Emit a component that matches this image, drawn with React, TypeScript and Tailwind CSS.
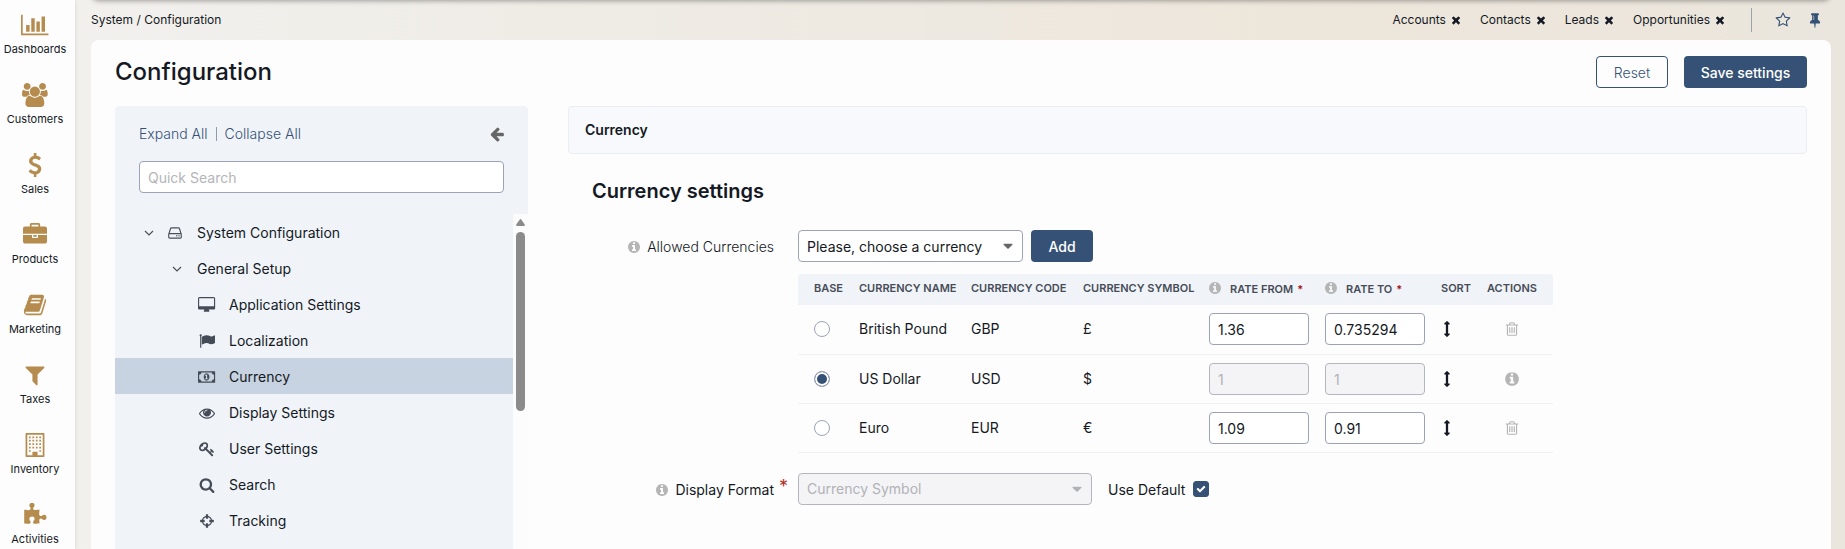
import React, { useState } from "react";

type Glyph = { w?: number; d: string };

const glyphs: Record<string, Glyph> = {
  chart: {
    w: 2048,
    d: "M640 896v512h-256v-512h256zm384-512v1024h-256v-1024h256zm1024 1152v128h-2048v-1536h128v1408h1920zm-640-896v768h-256v-768h256zm384-384v1152h-256v-1152h256z",
  },
  users: {
    w: 1920,
    d: "M593 896q-162 5-265 128h-134q-82 0-138-40.5t-56-118.5q0-353 124-353 6 0 43.5 21t97.5 42.5 119 21.5q67 0 133-23-5 37-5 66 0 139 81 256zm1071 637q0 120-73 189.5t-194 69.5h-874q-121 0-194-69.5t-73-189.5q0-53 3.5-103.5t14-109 26.5-108.5 43-97.5 62-81 85.5-53.5 111.5-20q10 0 43 21.5t73 48 107 48 135 21.5 135-21.5 107-48 73-48 43-21.5q61 0 111.5 20t85.5 53.5 62 81 43 97.5 26.5 108.5 14 109 3.5 103.5zm-1024-1277q0 106-75 181t-181 75-181-75-75-181 75-181 181-75 181 75 75 181zm704 384q0 159-112.5 271.5t-271.5 112.5-271.5-112.5-112.5-271.5 112.5-271.5 271.5-112.5 271.5 112.5 112.5 271.5zm576 225q0 78-56 118.5t-138 40.5h-134q-103-123-265-128 81-117 81-256 0-29-5-66 66 23 133 23 59 0 119-21.5t97.5-42.5 43.5-21q124 0 124 353zm-128-609q0 106-75 181t-181 75-181-75-75-181 75-181 181-75 181 75 75 181z",
  },
  dollar: {
    d: "M1362 1185q0 153-99.5 263.5t-258.5 136.5v175q0 14-9 23t-23 9h-135q-13 0-22.5-9.5t-9.5-22.5v-175q-66-9-127.5-31t-101.5-44.5-74-48-46.5-37.5-17.5-18q-17-21-2-41l103-135q7-10 23-12 15-2 24 9l2 2q113 99 243 125 37 8 74 8 81 0 142.5-43t61.5-122q0-28-15-53t-33.5-42-58.5-37.5-66-32-80-32.5q-39-16-61.5-25t-61.5-26.5-62.5-31-56.5-35.5-53.5-42.5-43.5-49-35.5-58-21-66.5-8.5-78q0-138 98-242t255-134v-180q0-13 9.5-22.5t22.5-9.5h135q14 0 23 9t9 23v176q57 6 110.5 23t87 33.5 63.5 37.5 39 29 15 14q17 18 5 38l-81 146q-8 15-23 16-14 3-27-7-3-3-14.5-12t-39-26.5-58.5-32-74.5-26-85.5-11.5q-95 0-155 43t-60 111q0 26 8.5 48t29.5 41.5 39.5 33 56 31 60.5 27 70 27.5q53 20 81 31.5t76 35 75.5 42.5 62 50 53 63.5 31.5 76.5 13 94z",
  },
  briefcase: {
    d: "M640 256h512v-128h-512v128zm1152 640v480q0 66-47 113t-113 47h-1472q-66 0-113-47t-47-113v-480h672v160q0 26 19 45t45 19h320q26 0 45-19t19-45v-160h672zm-768 0v128h-256v-128h256zm768-480v384h-1792v-384q0-66 47-113t113-47h352v-160q0-40 28-68t68-28h576q40 0 68 28t28 68v160h352q66 0 113 47t47 113z",
  },
  book: {
    d: "M1703 478q40 57 18 129l-275 906q-19 64-76.5 107.5t-122.5 43.5h-923q-77 0-148.5-53.5t-99.5-131.5q-24-67-2-127 0-4 3-27t4-37q1-8-3-21.5t-3-19.5q2-11 8-21t16.5-23.5 16.5-23.5q23-38 45-91.5t30-91.5q3-10 .5-30t-.5-28q3-11 17-28t17-23q21-36 42-92t25-90q1-9-2.5-32t.5-28q4-13 22-30.5t22-22.5q19-26 42.5-84.5t27.5-96.5q1-8-3-25.5t-2-26.5q2-8 9-18t18-23 17-21q8-12 16.5-30.5t15-35 16-36 19.5-32 26.5-23.5 36-11.5 47.5 5.5l-1 3q38-9 51-9h761q74 0 114 56t18 130l-274 906q-36 119-71.5 153.5t-128.5 34.5h-869q-27 0-38 15-11 16-1 43 24 70 144 70h923q29 0 56-15.5t35-41.5l300-987q7-22 5-57 38 15 59 43zm-1064 2q-4 13 2 22.5t20 9.5h608q13 0 25.5-9.5t16.5-22.5l21-64q4-13-2-22.5t-20-9.5h-608q-13 0-25.5 9.5t-16.5 22.5zm-83 256q-4 13 2 22.5t20 9.5h608q13 0 25.5-9.5t16.5-22.5l21-64q4-13-2-22.5t-20-9.5h-608q-13 0-25.5 9.5t-16.5 22.5z",
  },
  filter: {
    d: "M1595 295q17 41-14 70l-493 493v742q0 42-39 59-13 5-25 5-27 0-45-19l-256-256q-19-19-19-45v-486l-493-493q-31-29-14-70 17-39 59-39h1280q42 0 59 39z",
  },
  building: {
    d: "M256 0h1280q26 0 45 19t19 45v1664q0 26-19 45t-45 19h-1280q-26 0-45-19t-19-45v-1664q0-26 19-45t45-19zM320 128v1536h384v-224q0-32 32-32h320q32 0 32 32v224h384v-1536zM448 256h128v128h-128zM704 256h128v128h-128zM960 256h128v128h-128zM1216 256h128v128h-128zM448 512h128v128h-128zM704 512h128v128h-128zM960 512h128v128h-128zM1216 512h128v128h-128zM448 768h128v128h-128zM704 768h128v128h-128zM960 768h128v128h-128zM1216 768h128v128h-128zM448 1024h128v128h-128zM704 1024h128v128h-128zM960 1024h128v128h-128zM1216 1024h128v128h-128zM448 1280h128v128h-128zM1216 1280h128v128h-128z",
  },
  puzzle: {
    d: "M1755 1083q0 81-44.5 135t-123.5 54q-41 0-77.5-17.5t-59-38-56.5-38-71-17.5q-110 0-110 124 0 39 16 115t15 115v5q-22 0-33 1-34 3-97.5 11.5t-115.5 13.5-98 5q-61 0-103-26.5t-42-83.5q0-37 17.5-71t38-56.5 38-59 17.5-77.5q0-79-54-123.5t-135-44.5q-84 0-143 45.5t-59 127.5q0 43 15 83t33.5 64.5 33.5 53 15 50.5q0 45-46 89-37 35-117 35-95 0-245-24-9-2-27.5-4t-27.5-4l-13-2q-1 0-3-1-2 0-2-1v-1024q2 1 17.5 3.5t34 5 21.5 3.5q150 24 245 24 80 0 117-35 46-44 46-89 0-22-15-50.5t-33.5-53-33.5-64.5-15-83q0-82 59-127.5t144-45.5q80 0 134 44.5t54 123.5q0 41-17.5 77.5t-38 59-38 56.5-17.5 71q0 57 42 83.5t103 26.5q64 0 180-15t163-17v2q-1 2-3.5 17.5t-5 34-3.5 21.5q-24 150-24 245 0 80 35 117 44 46 89 46 22 0 50.5-15t53-33.5 64.5-33.5 83-15q82 0 127.5 59t45.5 143z",
  },
  desktop: {
    w: 1920,
    d: "M1792 992v-832q0-13-9.5-22.5t-22.5-9.5h-1600q-13 0-22.5 9.5t-9.5 22.5v832q0 13 9.5 22.5t22.5 9.5h1600q13 0 22.5-9.5t9.5-22.5zm128-832v1088q0 66-47 113t-113 47h-544q0 37 16 77.5t32 71 16 43.5q0 26-19 45t-45 19h-512q-26 0-45-19t-19-45q0-14 16-44t32-70 16-78h-544q-66 0-113-47t-47-113v-1088q0-66 47-113t113-47h1600q66 0 113 47t47 113z",
  },
  flag: {
    d: "M320 256q0 72-64 110v1266q0 13-9.5 22.5t-22.5 9.5h-64q-13 0-22.5-9.5t-9.5-22.5v-1266q-64-38-64-110 0-53 37.5-90.5t90.5-37.5 90.5 37.5 37.5 90.5zm1472 64v763q0 25-12.5 38.5t-39.5 27.5q-215 116-369 116-61 0-123.5-22t-108.5-48-115.5-48-142.5-22q-192 0-464 146-17 9-33 9-26 0-45-19t-19-45v-742q0-32 31-55 21-14 79-43 236-120 421-120 107 0 200 29t219 88q38 19 88 19 54 0 117.5-21t110-47 88-47 54.5-21q26 0 45 19t19 45z",
  },
  money: {
    w: 1920,
    d: "M768 1152h384v-96h-128v-448h-114l-148 137 77 80q42-37 55-57h2v288h-128v96zm512-256q0 70-21 142t-59.5 134-101.5 101-138 39-138-39-101.5-101-59.5-134-21-142 21-142 59.5-134 101.5-101 138-39 138 39 101.5 101 59.5 134 21 142zm512 256v-512q-106 0-181-75t-75-181h-1152q0 106-75 181t-181 75v512q106 0 181 75t75 181h1152q0-106 75-181t181-75zm128-832v1152q0 26-19 45t-45 19h-1792q-26 0-45-19t-19-45v-1152q0-26 19-45t45-19h1792q26 0 45 19t19 45z",
  },
  eye: {
    d: "M1664 960q-152-236-381-353 61 104 61 225 0 185-131.5 316.5t-316.5 131.5-316.5-131.5-131.5-316.5q0-121 61-225-229 117-381 353 133 205 333.5 326.5t434.5 121.5 434.5-121.5 333.5-326.5zm-720-384q0-20-14-34t-34-14q-125 0-214.5 89.5t-89.5 214.5q0 20 14 34t34 14 34-14 14-34q0-86 61-147t147-61q20 0 34-14t14-34zm848 384q0 34-20 69-140 230-376.5 368.5t-499.5 138.5-499.5-139-376.5-368q-20-35-20-69t20-69q140-229 376.5-368t499.5-139 499.5 139 376.5 368q20 35 20 69z",
  },
  key: {
    d: "M832 512q0-80-56-136t-136-56-136 56-56 136q0 42 19 83-41-19-83-19-80 0-136 56t-56 136 56 136 136 56 136-56 56-136q0-42-19-83 41 19 83 19 80 0 136-56t56-136zm851 704q0 17-49 66t-66 49q-9 0-28.5-16t-36.5-33-38.5-40-24.5-26l-96 96 220 220q28 28 28 68 0 42-39 81t-81 39q-40 0-68-28l-671-671q-176 131-365 131-163 0-265.5-102.5t-102.5-265.5q0-160 95-313t248-248 313-95q163 0 265.5 102.5t102.5 265.5q0 189-131 365l355 355 96-96q-3-3-26-24.5t-40-38.5-33-36.5-16-28.5q0-17 49-66t66-49q13 0 23 10 6 6 46 44.5t82 79.5 86.5 86 73 78 28.5 41z",
  },
  search: {
    d: "M1216 832q0-185-131.5-316.5t-316.5-131.5-316.5 131.5-131.5 316.5 131.5 316.5 316.5 131.5 316.5-131.5 131.5-316.5zm512 832q0 52-38 90t-90 38q-54 0-90-38l-343-342q-179 124-399 124-143 0-273.5-55.5t-225-150-150-225-55.5-273.5 55.5-273.5 150-225 225-150 273.5-55.5 273.5 55.5 225 150 150 225 55.5 273.5q0 220-124 399l343 343q37 37 37 90z",
  },
  crosshairs: {
    d: "M1325 1024h-109q-26 0-45-19t-19-45v-128q0-26 19-45t45-19h109q-32-108-112.5-188.5t-188.5-112.5v109q0 26-19 45t-45 19h-128q-26 0-45-19t-19-45v-109q-108 32-188.5 112.5t-112.5 188.5h109q26 0 45 19t19 45v128q0 26-19 45t-45 19h-109q32 108 112.5 188.5t188.5 112.5v-109q0-26 19-45t45-19h128q26 0 45 19t19 45v109q108-32 188.5-112.5t112.5-188.5zm339-192v128q0 26-19 45t-45 19h-143q-37 161-154.5 278.5t-278.5 154.5v143q0 26-19 45t-45 19h-128q-26 0-45-19t-19-45v-143q-161-37-278.5-154.5t-154.5-278.5h-143q-26 0-45-19t-19-45v-128q0-26 19-45t45-19h143q37-161 154.5-278.5t278.5-154.5v-143q0-26 19-45t45-19h128q26 0 45 19t19 45v143q161 37 278.5 154.5t154.5 278.5h143q26 0 45 19t19 45z",
  },
  close: {
    d: "M1490 1322q0 40-28 68l-136 136q-28 28-68 28t-68-28l-294-294-294 294q-28 28-68 28t-68-28l-136-136q-28-28-28-68t28-68l294-294-294-294q-28-28-28-68t28-68l136-136q28-28 68-28t68 28l294 294 294-294q28-28 68-28t68 28l136 136q28 28 28 68t-28 68l-294 294 294 294q28 28 28 68z",
  },
  star: {
    d: "M1201 1004l306-297-422-62-189-382-189 382-422 62 306 297-73 421 378-199 377 199zm527-357q0 22-26 48l-363 354 86 500q1 7 1 20 0 50-41 50-19 0-40-12l-449-236-449 236q-22 12-40 12-21 0-31.5-14.5t-10.5-35.5q0-6 2-20l86-500-364-354q-25-27-25-48 0-37 56-46l502-73 225-455q19-41 49-41t49 41l225 455 502 73q56 9 56 46z",
  },
  pin: {
    d: "M800 864v-448q0-14-9-23t-23-9-23 9-9 23v448q0 14 9 23t23 9 23-9 9-23zm672 352q0 26-19 45t-45 19h-429l-51 483q-2 12-10.5 20.5t-20.5 8.5h-1q-27 0-32-27l-76-485h-404q-26 0-45-19t-19-45q0-123 78.5-221.5t177.5-98.5v-512q-52 0-90-38t-38-90 38-90 90-38h640q52 0 90 38t38 90-38 90-90 38v512q99 0 177.5 98.5t78.5 221.5z",
  },
  arrowLeft: {
    d: "M1664 896v128q0 53-32.5 90.5t-84.5 37.5h-704l293 294q38 36 38 90t-38 90l-75 76q-37 37-90 37-52 0-91-37l-651-652q-37-37-37-90 0-52 37-91l651-650q38-38 91-38 52 0 90 38l75 74q38 38 38 91t-38 91l-293 293h704q52 0 84.5 37.5t32.5 90.5z",
  },
  info: {
    d: "M1152 1376v-160q0-14-9-23t-23-9h-96v-512q0-14-9-23t-23-9h-320q-14 0-23 9t-9 23v160q0 14 9 23t23 9h96v320h-96q-14 0-23 9t-9 23v160q0 14 9 23t23 9h448q14 0 23-9t9-23zm-128-896v-160q0-14-9-23t-23-9h-192q-14 0-23 9t-9 23v160q0 14 9 23t23 9h192q14 0 23-9t9-23zm640 416q0 209-103 385.5t-279.5 279.5-385.5 103-385.5-103-279.5-279.5-103-385.5 103-385.5 279.5-279.5 385.5-103 385.5 103 279.5 279.5 103 385.5z",
  },
  trash: {
    d: "M704 736v576q0 14-9 23t-23 9h-64q-14 0-23-9t-9-23v-576q0-14 9-23t23-9h64q14 0 23 9t9 23zm256 0v576q0 14-9 23t-23 9h-64q-14 0-23-9t-9-23v-576q0-14 9-23t23-9h64q14 0 23 9t9 23zm256 0v576q0 14-9 23t-23 9h-64q-14 0-23-9t-9-23v-576q0-14 9-23t23-9h64q14 0 23 9t9 23zm128 724v-948h-896v948q0 22 7 40.5t14.5 27 10.5 8.5h832q3 0 10.5-8.5t14.5-27 7-40.5zm-672-1076h448l-48-117q-7-9-17-11h-317q-10 2-17 11zm928 32v64q0 14-9 23t-23 9h-96v948q0 83-47 143.5t-113 60.5h-832q-66 0-113-58.5t-47-141.5v-952h-96q-14 0-23-9t-9-23v-64q0-14 9-23t23-9h309l70-167q15-37 54-63t79-26h320q40 0 79 26t54 63l70 167h309q14 0 23 9t9 23z",
  },
  arrowsV: {
    d: "M1216 320q0 26-19 45t-45 19h-128v1024h128q26 0 45 19t19 45-19 45l-256 256q-19 19-45 19t-45-19l-256-256q-19-19-19-45t19-45 45-19h128v-1024h-128q-26 0-45-19t-19-45 19-45l256-256q19-19 45-19t45 19l256 256q19 19 19 45z",
  },
  drive: {
    d: "M1168 1216q0 33-23.5 56.5t-56.5 23.5-56.5-23.5-23.5-56.5 23.5-56.5 56.5-23.5 56.5 23.5 23.5 56.5zm256 0q0 33-23.5 56.5t-56.5 23.5-56.5-23.5-23.5-56.5 23.5-56.5 56.5-23.5 56.5 23.5 23.5 56.5zm112 160v-320q0-13-9.5-22.5t-22.5-9.5h-1216q-13 0-22.5 9.5t-9.5 22.5v320q0 13 9.5 22.5t22.5 9.5h1216q13 0 22.5-9.5t9.5-22.5zm-1230-480h1180l-157-482q-4-13-16-21.5t-26-8.5h-782q-14 0-26 8.5t-16 21.5zm1358 160v320q0 66-47 113t-113 47h-1216q-66 0-113-47t-47-113v-320q0-25 16-75l197-606q17-53 63-86t101-33h782q55 0 101 33t63 86l197 606q16 50 16 75z",
  },
  check: {
    d: "M1671 566q0 40-28 68l-724 724-136 136q-28 28-68 28t-68-28l-136-136-362-362q-28-28-28-68t28-68l136-136q28-28 68-28t68 28l294 295 656-657q28-28 68-28t68 28l136 136q28 28 28 68z",
  },
  caret: {
    d: "M1408 704q0 26-19 45l-448 448q-19 19-45 19t-45-19l-448-448q-19-19-19-45t19-45 45-19h896q26 0 45 19t19 45z",
  },
  copy: {
    d: "M1024 1248v224q0 13-9.5 22.5t-22.5 9.5h-832v-1376h640v256h832v1280h-480v-128h352v-1024h-512v736z",
  },
};

function Icon({ name, className }: { name: string; className: string }) {
  const g = glyphs[name];
  return (
    <svg viewBox={`0 0 ${g.w ?? 1792} 1792`} fill="currentColor" fillRule="evenodd" aria-hidden="true" className={`shrink-0 ${className}`}>
      <path d={g.d} />
    </svg>
  );
}

function Chevron() {
  return (
    <svg viewBox="0 0 10 6" aria-hidden="true" className="h-[6px] w-[10px] shrink-0 text-[#4a4f59]">
      <path d="M1 1l4 4 4-4" fill="none" stroke="currentColor" strokeWidth="1.2" />
    </svg>
  );
}

const navItems = [
  ["Dashboards", "chart"],
  ["Customers", "users"],
  ["Sales", "dollar"],
  ["Products", "briefcase"],
  ["Marketing", "book"],
  ["Taxes", "filter"],
  ["Inventory", "building"],
  ["Activities", "puzzle"],
];

const pinnedTabs = ["Accounts", "Contacts", "Leads", "Opportunities"];

const treeLeaves = [
  ["Application Settings", "desktop"],
  ["Localization", "flag"],
  ["Currency", "money"],
  ["Display Settings", "eye"],
  ["User Settings", "key"],
  ["Search", "search"],
  ["Tracking", "crosshairs"],
  ["", "copy"],
];

const currencies = [
  { name: "British Pound", code: "GBP", symbol: "£", from: "1.36", to: "0.735294" },
  { name: "US Dollar", code: "USD", symbol: "$", from: "1", to: "1" },
  { name: "Euro", code: "EUR", symbol: "€", from: "1.09", to: "0.91" },
];

const rateInput =
  "block h-8 w-[100px] rounded border border-[#9ca3b8] bg-white px-2 pt-px text-sm text-[#141924] disabled:border-[#b4b6bd] disabled:bg-[#f4f4f6] disabled:text-[#b0b2b7]";

function Sidebar() {
  return (
    <nav aria-label="Main" className="z-10 flex w-[75px] shrink-0 flex-col bg-[#fdfdfd] pt-px shadow-[0_0_4px_rgba(0,0,0,0.12)]">
      {navItems.map(([label, icon]) => (
        <a key={label} href="#" className="flex h-[70px] shrink-0 flex-col items-center px-px pt-3">
          <span className="flex h-6 w-full justify-center pr-[5px] text-[#b68c4e]">
            <Icon name={icon} className="h-6" />
          </span>
          <span className="mt-1 w-full pr-[5px] text-center text-[11px] leading-4 text-[#141924]">{label}</span>
        </a>
      ))}
    </nav>
  );
}

function TopBar() {
  return (
    <header className="flex h-10 items-center justify-between pr-[8px] text-xs text-[#141924]">
      <div>System / Configuration</div>
      <div className="flex items-center">
        <ul className="flex items-center gap-[18px]">
          {pinnedTabs.map((tab) => (
            <li key={tab} className="flex items-center gap-1">
              <a href="#">{tab}</a>
              <button type="button" aria-label={`Close ${tab}`}>
                <Icon name="close" className="h-3 w-3" />
              </button>
            </li>
          ))}
        </ul>
        <span className="mr-[23px] ml-[25px] h-6 w-px bg-[#9ca3b0]" />
        <button type="button" aria-label="Add to favorites" className="text-[#355276]">
          <Icon name="star" className="h-4 w-4" />
        </button>
        <button type="button" aria-label="Pin page" className="ml-4 text-[#355276]">
          <Icon name="pin" className="h-4 w-4" />
        </button>
      </div>
    </header>
  );
}

function ConfigTree() {
  return (
    <aside className="flex w-[413px] shrink-0 flex-col rounded-t bg-[#f0f4f9]">
      <div className="px-6 pt-[18px] pb-[21px]">
        <div className="flex h-5 items-center justify-between text-sm text-[#355276]">
          <div className="flex items-center gap-2 font-light">
            <button type="button">Expand All</button>
            <span className="h-[14px] w-px bg-[#8f9bab]" />
            <button type="button">Collapse All</button>
          </div>
          <button type="button" aria-label="Hide panel" className="-mr-px text-[#666]">
            <Icon name="arrowLeft" className="h-4 w-4" />
          </button>
        </div>
        <input
          type="text"
          aria-label="Quick Search"
          placeholder="Quick Search"
          className="mt-[17px] block h-8 w-full rounded border border-[#9ca3b8] bg-white px-2 pt-px text-sm text-[#141924] placeholder:text-[#b4b5b8]"
        />
      </div>
      <div className="flex min-h-0 flex-1">
        <ul className="min-w-0 flex-1 overflow-hidden text-sm text-[#141924]">
          <li className="flex h-9 items-center pt-0.5 pl-[29px]">
            <Chevron />
            <Icon name="drive" className="ml-[13px] h-4 w-4 text-[#4a4f59]" />
            <span className="ml-[14px]">System Configuration</span>
          </li>
          <li className="flex h-9 items-center pt-0.5 pl-[57px]">
            <Chevron />
            <span className="ml-[15px]">General Setup</span>
          </li>
          {treeLeaves.map(([label, icon]) => (
            <li key={icon} className={label === "Currency" ? "bg-[#c7d3e1]" : ""}>
              <a href="#" className="flex h-9 items-center pt-0.5 pl-[82px]">
                <span className="flex w-5 justify-center text-[#454b57]">
                  <Icon name={icon} className="h-4" />
                </span>
                <span className="ml-3">{label}</span>
              </a>
            </li>
          ))}
        </ul>
        <div aria-hidden="true" className="flex w-[15px] shrink-0 flex-col items-center bg-[#fcfcfc] pt-[5px]">
          <svg viewBox="0 0 9 7" className="h-[7px] w-[9px] fill-[#8b8b8b]">
            <path d="M3.6.7q.9-1.2 1.8 0L8.800 5.600Q9 7 8 7H1Q0 7 .2 5.600z" />
          </svg>
          <div className="mt-[6px] h-[179px] w-[9px] rounded-full bg-[#8b8b8b]" />
        </div>
      </div>
    </aside>
  );
}

function CurrencyTable() {
  const [base, setBase] = useState("USD");
  return (
    <table className="table-fixed w-[755px] text-left text-sm text-[#141924]">
      <colgroup>
        <col className="w-[53px]" />
        <col className="w-[112px]" />
        <col className="w-[112px]" />
        <col className="w-[126px]" />
        <col className="w-[116px]" />
        <col className="w-[116px]" />
        <col className="w-[46px]" />
        <col className="w-[74px]" />
      </colgroup>
      <thead className="bg-[#f0f4f9] text-[11px] text-[#474c56] uppercase">
        <tr className="h-[31px] whitespace-nowrap [&>th]:pb-0.5 [&>th]:font-semibold">
          <th className="rounded-tl-sm pl-4">Base</th>
          <th className="pl-2">Currency name</th>
          <th className="pl-2">Currency code</th>
          <th className="pl-2">Currency symbol</th>
          {["Rate from", "Rate to"].map((t) => (
            <th key={t} className="pl-[7px]">
              <span className="flex items-center">
                <Icon name="info" className="h-[14px] w-[14px] text-[#b5b5b5]" />
                <span className="ml-2 pt-[3px]">{t}</span>
                <span className="ml-1 pt-[3px] text-[#a31515]">*</span>
              </span>
            </th>
          ))}
          <th className="pl-2">Sort</th>
          <th className="rounded-tr-sm pl-2">Actions</th>
        </tr>
      </thead>
      <tbody>
        {currencies.map((c) => {
          const isBase = c.code === base;
          return (
            <tr key={c.code} className="h-[49px] border-b border-[#f0f1f3]">
              <td className="pl-4">
                <input
                  type="radio"
                  name="base"
                  aria-label={`Base currency ${c.name}`}
                  checked={isBase}
                  onChange={() => setBase(c.code)}
                  className="block h-4 w-4 appearance-none rounded-full border border-[#9ca3b8] bg-white checked:bg-[#355276] checked:shadow-[inset_0_0_0_2px_white]"
                />
              </td>
              <td className="pl-2">{c.name}</td>
              <td className="pl-2">{c.code}</td>
              <td className="pl-2">{c.symbol}</td>
              <td className="pl-2">
                <input aria-label={`${c.name} rate from`} defaultValue={c.from} disabled={isBase} className={rateInput} />
              </td>
              <td className="pl-2">
                <input aria-label={`${c.name} rate to`} defaultValue={c.to} disabled={isBase} className={rateInput} />
              </td>
              <td className="pl-1.5">
                <button type="button" aria-label={`Move ${c.name}`} className="block">
                  <Icon name="arrowsV" className="h-4 w-4" />
                </button>
              </td>
              <td className="pl-[25px] text-[#b5b5b5]">
                <button type="button" aria-label={isBase ? "Base currency info" : `Delete ${c.name}`} className="block">
                  <Icon name={isBase ? "info" : "trash"} className="h-4 w-4" />
                </button>
              </td>
            </tr>
          );
        })}
      </tbody>
    </table>
  );
}

function SettingsForm() {
  const [useDefault, setUseDefault] = useState(true);
  return (
    <section className="min-w-0 flex-1">
      <h2 className="flex h-12 items-center rounded border border-[#eaedf1] bg-[#f8f9fc] px-4 text-sm font-semibold text-[#141924]">
        Currency
      </h2>
      <h3 className="mt-[23px] ml-6 text-xl leading-7 font-semibold text-[#141924]">Currency settings</h3>
      <div className="mt-[25px] grid grid-cols-[206px_1fr] gap-x-6 gap-y-5">
        <label htmlFor="allowed" className="flex h-8 items-center justify-end gap-1.5 pt-0.5 text-sm font-light text-[#141924]">
          <Icon name="info" className="h-[14px] w-[14px] text-[#b5b5b5]" />
          Allowed Currencies
        </label>
        <div>
          <div className="flex gap-2">
            <div className="relative w-[225px]">
              <select
                id="allowed"
                className="h-8 w-full appearance-none rounded border border-[#9ca3b8] bg-white px-2 pt-0.5 text-sm text-[#141924]"
              >
                <option>Please, choose a currency</option>
              </select>
              <Icon name="caret" className="pointer-events-none absolute top-2 right-[7px] h-4 w-4 text-[#666]" />
            </div>
            <button type="button" className="h-8 w-[62px] rounded bg-[#355276] pt-0.5 text-sm font-medium text-white">
              Add
            </button>
          </div>
          <div className="mt-3">
            <CurrencyTable />
          </div>
        </div>

        <label htmlFor="format" className="relative flex h-8 items-center justify-end gap-1.5 pt-0.5 text-sm text-[#141924]">
          <Icon name="info" className="h-[14px] w-[14px] text-[#b5b5b5]" />
          Display Format
          <span className="absolute -right-[14px] top-0 text-lg text-[#b3312c]">*</span>
        </label>
        <div className="flex items-center">
          <div className="relative w-[294px]">
            <select
              id="format"
              disabled={useDefault}
              className="block h-8 w-full appearance-none rounded border border-[#b4b6bd] bg-[#f4f4f6] px-2 text-sm text-[#b0b2b7] opacity-100"
            >
              <option>Currency Symbol</option>
            </select>
            <Icon name="caret" className="pointer-events-none absolute top-2 right-[7px] h-4 w-4 text-[#b0b2b7]" />
          </div>
          <label htmlFor="default" className="ml-4 pt-0.5 text-sm text-[#141924]">
            Use Default
          </label>
          <span className="relative ml-2 h-4 w-4">
            <input
              id="default"
              type="checkbox"
              checked={useDefault}
              onChange={(e) => setUseDefault(e.target.checked)}
              className="block h-4 w-4 appearance-none rounded-[3px] border border-[#355276] bg-white checked:bg-[#355276]"
            />
            {useDefault && <Icon name="check" className="pointer-events-none absolute top-[3px] left-[3px] h-[10px] w-[10px] text-white" />}
          </span>
        </div>
      </div>
    </section>
  );
}

export default function App() {
  return (
    <div className="flex h-screen overflow-hidden bg-[linear-gradient(90deg,#f2f1ee_0%,#efece6_30%,#ede6db_70%,#ebe6dd_100%)] font-['Inter',sans-serif]">
      <Sidebar />
      <div className="relative flex min-w-0 flex-1 flex-col px-4 pr-[14px]">
        <div className="absolute -top-2 right-[14px] left-4 h-2 rounded-b-lg shadow-[0_1px_5px_rgba(0,0,0,0.35)]" />
        <TopBar />
        <main className="flex min-h-0 flex-1 flex-col rounded-t-lg bg-[#fdfdfd] px-6 pt-4">
          <div className="flex h-8 items-center justify-between">
            <h1 className="text-2xl font-medium text-[#141924]">Configuration</h1>
            <div className="flex gap-4 text-sm">
              <button type="button" className="h-8 w-[72px] rounded border border-[#355276] pt-0.5 font-light text-[#355276]">
                Reset
              </button>
              <button type="button" className="h-8 w-[123px] rounded bg-[#355276] pt-0.5 font-medium text-white">
                Save settings
              </button>
            </div>
          </div>
          <div className="mt-[18px] flex min-h-0 flex-1 gap-10">
            <ConfigTree />
            <SettingsForm />
          </div>
        </main>
      </div>
    </div>
  );
}
